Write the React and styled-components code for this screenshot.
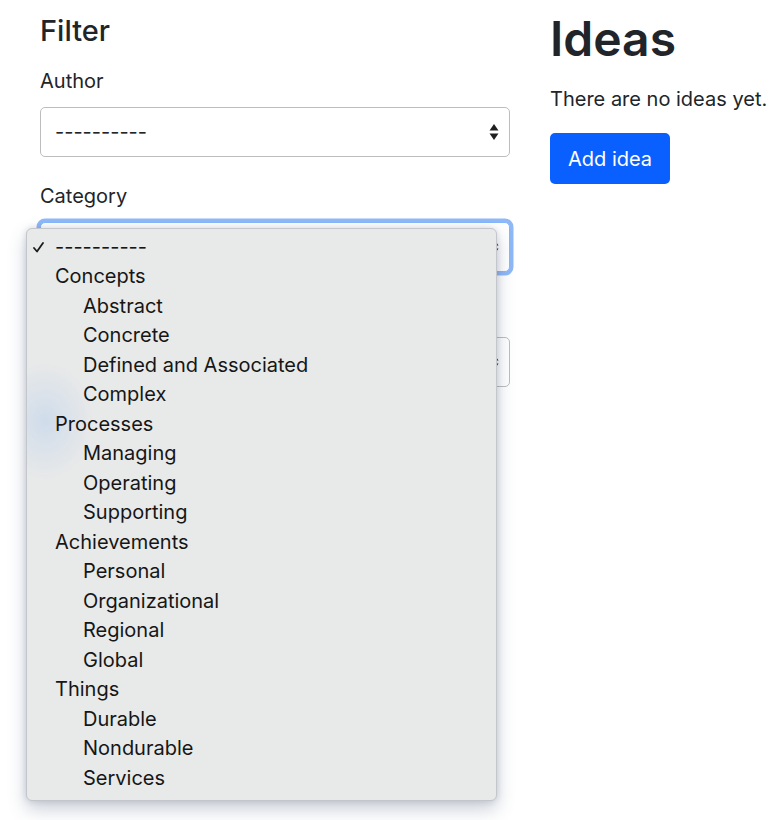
import styled, { createGlobalStyle } from "styled-components";

const GlobalStyle = createGlobalStyle`
  html, body {
    margin: 0;
    padding: 0;
    background: #ffffff;
  }
  body {
    font-family: Inter, "Liberation Sans", sans-serif;
    color: #212529;
  }
`;

const Page = styled.div`
  display: flex;
  gap: 40px;
  min-height: 820px;
  box-sizing: border-box;
  padding: 14px 0 0 40px;
`;

const FilterColumn = styled.div`
  width: 470px;
  flex-shrink: 0;
`;

const IdeasColumn = styled.div`
  flex: 1;
  white-space: nowrap;
`;

const FilterTitle = styled.h2`
  margin: 0 0 17px;
  font-size: 29px;
  font-weight: 500;
  line-height: 1.2;
`;

const Field = styled.div`
  position: relative;
  margin-bottom: 24px;
`;

const Label = styled.label`
  display: block;
  font-size: 20px;
  line-height: 30px;
  height: 30px;
  margin-bottom: 11px;
`;

const SelectBox = styled.div`
  height: 50px;
  box-sizing: border-box;
  border: 1px solid ${(p) => (p.$focused ? "#86b7fe" : "#bdbdbd")};
  border-radius: 5px;
  padding: 0 10px 0 14px;
  display: flex;
  align-items: center;
  justify-content: space-between;
  font-size: 20px;
  background: #fff;
  box-shadow: ${(p) => (p.$focused ? "0 0 0 3.5px #8fb8f7" : "none")};
`;

const Arrows = () => (
  <svg width="10" height="18" viewBox="0 0 10 18">
    <path d="M5 1 L9.5 7.5 H0.5 Z" fill="#1f1f1f" />
    <path d="M5 17 L9.5 10.5 H0.5 Z" fill="#1f1f1f" />
  </svg>
);

const Menu = styled.ul`
  position: absolute;
  left: -14px;
  top: 47px;
  width: 471px;
  margin: 0;
  padding: 4px 0 7px;
  list-style: none;
  box-sizing: border-box;
  background: radial-gradient(
      ellipse 48px 58px at 18px 192px,
      rgba(150, 190, 240, 0.3),
      rgba(150, 190, 240, 0) 100%
    ),
    #e8e9e9;
  border: 1px solid #c3c6ca;
  border-radius: 6px;
  box-shadow: 0 8px 18px rgba(60, 80, 110, 0.28), 0 0 6px rgba(60, 80, 110, 0.18);
  z-index: 10;
`;

const MenuItem = styled.li`
  position: relative;
  height: 29.5px;
  line-height: 29.5px;
  font-size: 20px;
  color: #161616;
  padding-left: ${(p) => (p.$level === 2 ? "56px" : "28px")};
  white-space: nowrap;
`;

const Check = styled.span`
  position: absolute;
  left: 6px;
  top: 0;
  display: flex;
  align-items: center;
  height: 100%;
`;

const IdeasTitle = styled.h1`
  margin: 0 0 20px;
  font-size: 48px;
  font-weight: 600;
  line-height: 1.05;
`;

const Empty = styled.p`
  margin: 0 0 19px;
  font-size: 20px;
  line-height: 30px;
`;

const Button = styled.button`
  font-family: inherit;
  font-size: 20px;
  color: #fff;
  background: #0a60fe;
  border: none;
  border-radius: 5px;
  height: 51px;
  padding: 0 18px;
  cursor: pointer;
`;

const options = [
  { label: "----------", level: 1, checked: true },
  { label: "Concepts", level: 1 },
  { label: "Abstract", level: 2 },
  { label: "Concrete", level: 2 },
  { label: "Defined and Associated", level: 2 },
  { label: "Complex", level: 2 },
  { label: "Processes", level: 1 },
  { label: "Managing", level: 2 },
  { label: "Operating", level: 2 },
  { label: "Supporting", level: 2 },
  { label: "Achievements", level: 1 },
  { label: "Personal", level: 2 },
  { label: "Organizational", level: 2 },
  { label: "Regional", level: 2 },
  { label: "Global", level: 2 },
  { label: "Things", level: 1 },
  { label: "Durable", level: 2 },
  { label: "Nondurable", level: 2 },
  { label: "Services", level: 2 },
];

const App = () => {
  return (
    <>
      <GlobalStyle />
      <Page>
        <FilterColumn>
          <FilterTitle>Filter</FilterTitle>

          <Field>
            <Label>Author</Label>
            <SelectBox>
              <span>----------</span>
              <Arrows />
            </SelectBox>
          </Field>

          <Field>
            <Label>Category</Label>
            <SelectBox $focused>
              <span>----------</span>
              <Arrows />
            </SelectBox>
            <Menu>
              {options.map((o, idx) => (
                <MenuItem key={idx} $level={o.level}>
                  {o.checked && (
                    <Check>
                      <svg width="11" height="11" viewBox="0 0 11 11">
                        <path
                          d="M1 6 L4 9.5 L10 1"
                          fill="none"
                          stroke="#1c1c1c"
                          strokeWidth="1.8"
                          strokeLinecap="round"
                          strokeLinejoin="round"
                        />
                      </svg>
                    </Check>
                  )}
                  {o.label}
                </MenuItem>
              ))}
            </Menu>
          </Field>

          {/* third filter sits under the open menu, only its right edge shows */}
          <Field>
            <Label />
            <SelectBox>
              <span />
              <Arrows />
            </SelectBox>
          </Field>
        </FilterColumn>

        <IdeasColumn>
          <IdeasTitle>Ideas</IdeasTitle>
          <Empty>There are no ideas yet.</Empty>
          <Button>Add idea</Button>
        </IdeasColumn>
      </Page>
    </>
  );
};

export default App;
